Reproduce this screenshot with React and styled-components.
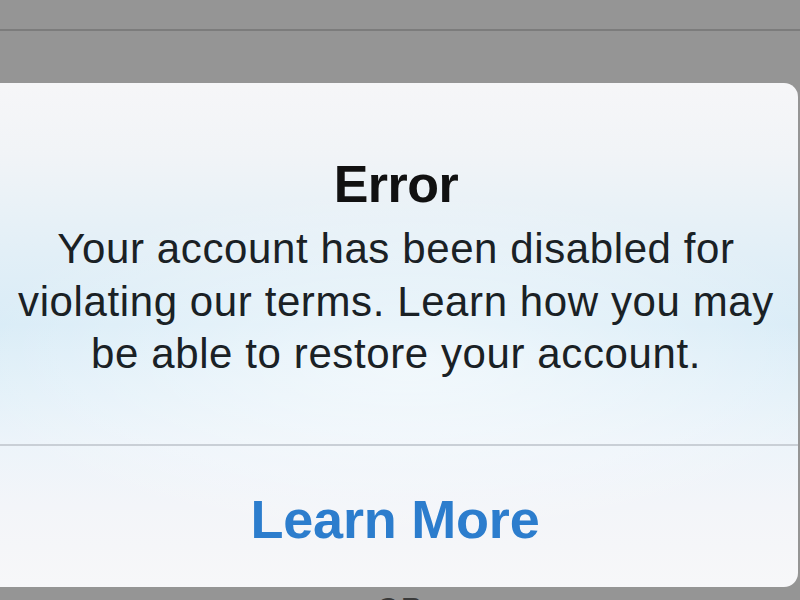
import React from "react";
import styled, { createGlobalStyle } from "styled-components";

const GlobalStyle = createGlobalStyle`
  html, body {
    margin: 0;
    padding: 0;
    background: #959595;
  }
  * {
    box-sizing: border-box;
  }
`;

const Screen = styled.div`
  width: 800px;
  height: 600px;
  overflow: hidden;
  background: #959595;
  display: flex;
  flex-direction: column;
  font-family: "Liberation Sans", "Open Sans", sans-serif;
`;

const TopBar = styled.div`
  height: 31px;
  flex-shrink: 0;
  border-bottom: 2px solid #7c7c7c;
`;

const Backdrop = styled.div`
  height: 52px;
  flex-shrink: 0;
`;

const Alert = styled.div`
  height: 504px;
  flex-shrink: 0;
  margin: 0 2px 0 -14px;
  border-radius: 14px;
  overflow: hidden;
  display: flex;
  flex-direction: column;
  background:
    radial-gradient(ellipse 55% 35% at 52% 56%, rgba(255, 255, 255, 0.55), rgba(255, 255, 255, 0) 100%),
    linear-gradient(
      to bottom,
      #f6f6f8 0%,
      #f1f4f7 14%,
      #e2eff7 34%,
      #d9ecf7 48%,
      #e4f1f9 62%,
      #edf4fa 72%,
      #f3f5f9 84%,
      #f7f7f9 100%
    );
`;

const Body = styled.div`
  height: 363px;
  display: flex;
  flex-direction: column;
  align-items: center;
  padding: 71px 0 0 8px;
  border-bottom: 2px solid #c9cfd6;
`;

const Title = styled.h1`
  margin: 0;
  font-size: 52px;
  font-weight: 700;
  line-height: 60px;
  color: #111;
  letter-spacing: -0.5px;
`;

const Message = styled.p`
  margin: 9px 0 0;
  font-size: 42px;
  line-height: 52.5px;
  color: #1a2125;
  text-align: center;
  letter-spacing: 0.6px;
  white-space: nowrap;
`;

const Action = styled.button`
  flex: 1;
  border: 0;
  background: transparent;
  padding: 4px 0 0 6px;
  font-family: inherit;
  font-size: 54px;
  font-weight: 700;
  color: #2c7dcd;
  letter-spacing: -0.2px;
  cursor: pointer;
`;

const Below = styled.div`
  display: flex;
  justify-content: center;
  padding: 4px 0 0 0;
  font-size: 30px;
  color: #3a3a3a;
  letter-spacing: 1px;
`;

export default function App() {
  return (
    <>
      <GlobalStyle />
      <Screen>
        <TopBar />
        <Backdrop />
        <Alert>
          <Body>
            <Title>Error</Title>
            <Message>
              Your account has been disabled for
              <br />
              violating our terms. Learn how you may
              <br />
              be able to restore your account.
            </Message>
          </Body>
          <Action>Learn More</Action>
        </Alert>
        <Below>OR</Below>
      </Screen>
    </>
  );
}
